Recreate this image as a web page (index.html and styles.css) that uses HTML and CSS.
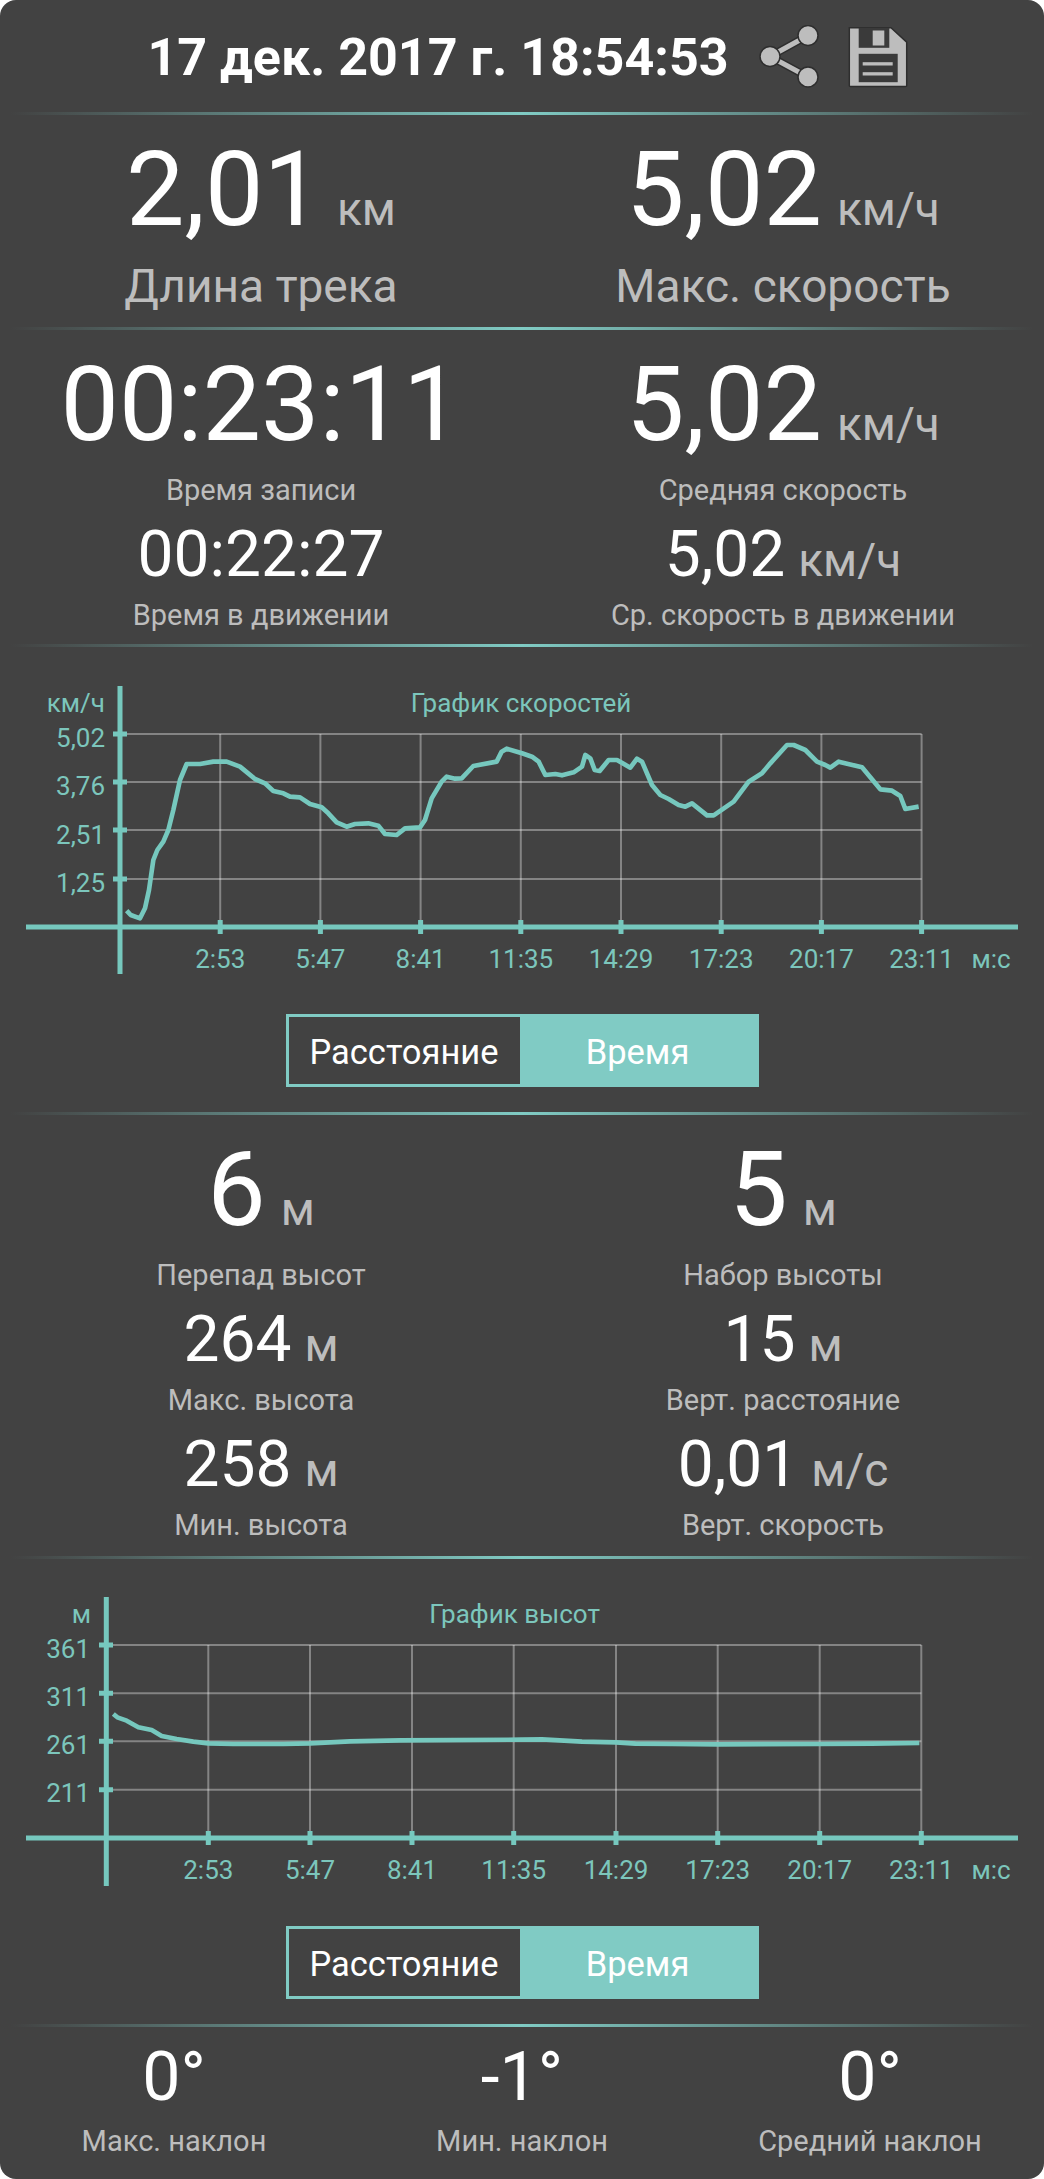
FILE: index.html
```html
<!DOCTYPE html>
<html lang="ru">
<head>
    <meta charset="UTF-8">
    <meta name="viewport" content="width=device-width, initial-scale=1.0">
    <title>Статистика трека</title>
    <link rel="stylesheet" href="styles.css">
</head>
<body>
<div class="panel">
    <div class="header">
        <div class="date">17 дек. 2017 г. 18:54:53</div>
        <svg class="icon-share" width="62" height="66" viewBox="0 0 62 66">
            <path class="icon-edge" d="M49 10.5 11 31.5 49 52"/>
            <path class="icon-line" d="M49 10.5 11 31.5 49 52"/>
            <circle class="icon-dot" cx="49" cy="10.5" r="10"/>
            <circle class="icon-dot" cx="11" cy="31.5" r="10"/>
            <circle class="icon-dot" cx="49" cy="52" r="10"/>
        </svg>
        <svg class="icon-save" width="62" height="66" viewBox="0 0 62 66">
            <path class="icon-body" d="M2.3 2.8H44L59.7 17.2V60.5A1 1 0 0 1 58.7 61.5H3.3A1 1 0 0 1 2.3 60.5Z"/>
            <rect class="icon-cut" x="11.7" y="2.8" width="30.6" height="20"/>
            <rect class="icon-light" x="25.7" y="5.5" width="11.6" height="15"/>
            <rect class="icon-cut" x="11.7" y="28.8" width="39" height="28.4"/>
            <rect class="icon-light" x="15.7" y="37.2" width="30" height="3.3"/>
            <rect class="icon-light" x="15.7" y="47.2" width="30" height="3.3"/>
        </svg>
    </div>
    <div class="divider"></div>

    <div class="stats stats-track">
        <div class="stat">
            <div class="value value-xl">2,01<span class="unit unit-xl">км</span></div>
            <div class="label label-xl">Длина трека</div>
        </div>
        <div class="stat">
            <div class="value value-xl">5,02<span class="unit unit-xl">км/ч</span></div>
            <div class="label label-xl">Макс. скорость</div>
        </div>
    </div>
    <div class="divider"></div>

    <div class="stats stats-time">
        <div class="stat">
            <div class="value value-xl">00:23:11</div>
            <div class="label label-md">Время записи</div>
        </div>
        <div class="stat">
            <div class="value value-xl">5,02<span class="unit unit-xl">км/ч</span></div>
            <div class="label label-md">Средняя скорость</div>
        </div>
        <div class="stat">
            <div class="value value-md">00:22:27</div>
            <div class="label label-md">Время в движении</div>
        </div>
        <div class="stat">
            <div class="value value-md">5,02<span class="unit unit-md">км/ч</span></div>
            <div class="label label-md">Ср. скорость в движении</div>
        </div>
    </div>
    <div class="divider"></div>

    <div class="chart-block">
        <svg class="chart" width="1044" height="350" viewBox="0 0 1044 350">
            <path class="grid" d="M120 87H921.6M120 135H921.6M120 183H921.6M120 232H921.6"/>
            <path class="grid" d="M220.2 87V280M320.4 87V280M420.6 87V280M520.8 87V280M621 87V280M721.2 87V280M821.4 87V280M921.6 87V280"/>
            <path class="axis" d="M26 280H1018M120 39V327"/>
            <path class="axis" d="M113 87H127M113 135H127M113 183H127M113 232H127"/>
            <path class="axis" d="M220.2 273V287M320.4 273V287M420.6 273V287M520.8 273V287M621 273V287M721.2 273V287M821.4 273V287M921.6 273V287"/>
            <polyline class="curve" transform="translate(0 13) scale(.33333)" points="380,752 392,765 420,775 435,745 447,690 460,600 472,570 490,545 505,510 520,450 540,360 560,312 600,312 640,305 680,305 720,320 765,357 795,370 820,393 850,400 870,410 900,412 930,432 965,442 985,460 1010,487 1040,500 1065,492 1105,490 1135,497 1155,522 1190,525 1215,505 1260,502 1275,480 1295,415 1325,365 1340,350 1365,356 1385,355 1420,318 1490,305 1505,275 1520,266 1566,280 1596,290 1616,305 1636,345 1666,342 1686,346 1721,337 1746,320 1756,285 1771,295 1784,330 1799,333 1826,300 1851,300 1891,323 1911,296 1926,305 1956,375 1981,405 2006,417 2036,435 2056,440 2076,430 2121,466 2141,466 2201,425 2246,365 2286,340 2311,310 2361,255 2381,255 2416,270 2451,305 2476,315 2491,323 2516,305 2586,322 2641,388 2676,392 2701,408 2716,447 2756,440"/>
            <text class="tick tick-mid" x="521" y="65">График скоростей</text>
            <text class="tick tick-end" x="105" y="65">км/ч</text>
            <text class="tick tick-end" x="105" y="100">5,02</text>
            <text class="tick tick-end" x="105" y="148">3,76</text>
            <text class="tick tick-end" x="105" y="197">2,51</text>
            <text class="tick tick-end" x="105" y="245">1,25</text>
            <text class="tick tick-mid" x="220.2" y="321">2:53</text>
            <text class="tick tick-mid" x="320.4" y="321">5:47</text>
            <text class="tick tick-mid" x="420.6" y="321">8:41</text>
            <text class="tick tick-mid" x="520.8" y="321">11:35</text>
            <text class="tick tick-mid" x="621" y="321">14:29</text>
            <text class="tick tick-mid" x="721.2" y="321">17:23</text>
            <text class="tick tick-mid" x="821.4" y="321">20:17</text>
            <text class="tick tick-mid" x="921.6" y="321">23:11</text>
            <text class="tick tick-mid" x="991" y="321">м:с</text>
        </svg>
        <div class="toggle">
            <div class="toggle-item">Расстояние</div>
            <div class="toggle-item toggle-active">Время</div>
        </div>
    </div>
    <div class="divider"></div>

    <div class="stats stats-alt">
        <div class="stat">
            <div class="value value-xl">6<span class="unit unit-xl">м</span></div>
            <div class="label label-md">Перепад высот</div>
        </div>
        <div class="stat">
            <div class="value value-xl">5<span class="unit unit-xl">м</span></div>
            <div class="label label-md">Набор высоты</div>
        </div>
        <div class="stat">
            <div class="value value-md">264<span class="unit unit-md">м</span></div>
            <div class="label label-md">Макс. высота</div>
        </div>
        <div class="stat">
            <div class="value value-md">15<span class="unit unit-md">м</span></div>
            <div class="label label-md">Верт. расстояние</div>
        </div>
        <div class="stat">
            <div class="value value-md">258<span class="unit unit-md">м</span></div>
            <div class="label label-md">Мин. высота</div>
        </div>
        <div class="stat">
            <div class="value value-md">0,01<span class="unit unit-md">м/с</span></div>
            <div class="label label-md">Верт. скорость</div>
        </div>
    </div>
    <div class="divider"></div>

    <div class="chart-block">
        <svg class="chart" width="1044" height="350" viewBox="0 0 1044 350">
            <path class="grid" d="M106.3 86H921.3M106.3 134.3H921.3M106.3 182.3H921.3M106.3 230.7H921.3"/>
            <path class="grid" d="M208.3 86V279M310 86V279M412 86V279M513.7 86V279M616 86V279M717.7 86V279M819.7 86V279M921.3 86V279"/>
            <path class="axis" d="M26 279H1018M106.3 38V327"/>
            <path class="axis" d="M99 86H113M99 134.3H113M99 182.3H113M99 230.7H113"/>
            <path class="axis" d="M208.3 272V286M310 272V286M412 272V286M513.7 272V286M616 272V286M717.7 272V286M819.7 272V286M921.3 272V286"/>
            <polyline class="curve" transform="translate(0 21) scale(.33333)" points="340,402 352,412 380,422 415,442 455,450 485,468 530,477 580,485 625,490 700,492 850,492 930,490 1050,484 1200,481 1566,479 1626,478 1746,485 1848,487 1906,491 2016,492 2153,493 2459,492 2616,491 2758,489"/>
            <text class="tick tick-mid" x="514.6" y="64">График высот</text>
            <text class="tick tick-end" x="91" y="64">м</text>
            <text class="tick tick-end" x="90" y="99">361</text>
            <text class="tick tick-end" x="90" y="147">311</text>
            <text class="tick tick-end" x="90" y="195">261</text>
            <text class="tick tick-end" x="90" y="243">211</text>
            <text class="tick tick-mid" x="208.3" y="320">2:53</text>
            <text class="tick tick-mid" x="310" y="320">5:47</text>
            <text class="tick tick-mid" x="412" y="320">8:41</text>
            <text class="tick tick-mid" x="513.7" y="320">11:35</text>
            <text class="tick tick-mid" x="616" y="320">14:29</text>
            <text class="tick tick-mid" x="717.7" y="320">17:23</text>
            <text class="tick tick-mid" x="819.7" y="320">20:17</text>
            <text class="tick tick-mid" x="921.3" y="320">23:11</text>
            <text class="tick tick-mid" x="991" y="320">м:с</text>
        </svg>
        <div class="toggle">
            <div class="toggle-item">Расстояние</div>
            <div class="toggle-item toggle-active">Время</div>
        </div>
    </div>
    <div class="divider"></div>

    <div class="stats stats-slope">
        <div class="stat">
            <div class="value value-sm">0°</div>
            <div class="label label-md">Макс. наклон</div>
        </div>
        <div class="stat">
            <div class="value value-sm">-1°</div>
            <div class="label label-md">Мин. наклон</div>
        </div>
        <div class="stat">
            <div class="value value-sm">0°</div>
            <div class="label label-md">Средний наклон</div>
        </div>
    </div>
</div>
</body>
</html>
```
FILE: styles.css
```css
body {
    margin: 0;
    background-color: #fff;
    font-family: Roboto, "Liberation Sans", sans-serif;
}
.panel {
    width: 1044px;
    height: 2179px;
    overflow: hidden;
    background-color: #424242;
    border-radius: 16px;
}
.header {
    display: flex;
    align-items: center;
    justify-content: center;
    height: 112px;
    padding: 3px 0 0 12px;
    box-sizing: border-box;
}
.date {
    margin-right: 30px;
    color: #fff;
    font-size: 52px;
    font-weight: bold;
    white-space: nowrap;
}
.icon-share {
    margin-right: 26px;
}
.icon-edge {
    fill: none;
    stroke: #2e2e2e;
    stroke-width: 8;
}
.icon-line {
    fill: none;
    stroke: #bdbdbd;
    stroke-width: 5;
}
.icon-dot {
    fill: #bdbdbd;
    stroke: #2e2e2e;
    stroke-width: 1.5;
}
.icon-body {
    fill: #bdbdbd;
    stroke: #2e2e2e;
    stroke-width: 1.5;
}
.icon-cut {
    fill: #3a3a3a;
}
.icon-light {
    fill: #bdbdbd;
}
.divider {
    height: 3px;
    background: linear-gradient(90deg, #424242 1%, #80cbc4 50%, #424242 99%);
}
.stats {
    display: grid;
    grid-template-columns: 1fr 1fr;
    box-sizing: border-box;
    text-align: center;
}
.stats-track {
    height: 212px;
    padding-top: 20px;
}
.stats-time {
    height: 314px;
    padding-top: 20px;
    row-gap: 11px;
    align-content: start;
}
.stats-alt {
    height: 441px;
    padding-top: 20px;
    row-gap: 11px;
    align-content: start;
}
.stats-slope {
    grid-template-columns: 1fr 1fr 1fr;
    padding-top: 10px;
}
.value {
    color: #fff;
    white-space: nowrap;
}
.value-xl {
    font-size: 104px;
    line-height: 110px;
}
.value-md {
    font-size: 64px;
    line-height: 72px;
}
.value-sm {
    font-size: 68px;
    line-height: 80px;
}
.unit {
    color: #bdbdbd;
    font-size: 46px;
    line-height: 1;
}
.unit-xl {
    margin-left: 15px;
}
.unit-md {
    margin-left: 13px;
}
.label {
    margin-top: 6px;
    color: #bdbdbd;
}
.label-xl {
    margin-top: 13px;
    font-size: 46px;
    line-height: 56px;
}
.label-md {
    font-size: 29px;
    line-height: 36px;
}
.value-xl + .label-md {
    margin-top: 12px;
}
.chart {
    display: block;
}
.grid {
    fill: none;
    stroke: rgba(255, 255, 255, 0.35);
    stroke-width: 2;
}
.axis {
    fill: none;
    stroke: #76c8be;
    stroke-width: 5;
}
.curve {
    fill: none;
    stroke: #76c8be;
    stroke-width: 14;
    stroke-linejoin: round;
}
.tick {
    fill: #7cc6bc;
    font-size: 26px;
}
.tick-mid {
    text-anchor: middle;
}
.tick-end {
    text-anchor: end;
}
.chart-block {
    height: 465px;
}
.toggle {
    display: flex;
    width: 473px;
    height: 73px;
    margin: 17px auto 0;
    box-sizing: border-box;
    border: 3px solid #80cbc4;
}
.toggle-item {
    width: 231px;
    box-sizing: border-box;
    padding-top: 4px;
    color: #fff;
    font-size: 34.5px;
    line-height: 63px;
    text-align: center;
}
.toggle-active {
    flex: 1;
    background-color: #80cbc4;
}
```
